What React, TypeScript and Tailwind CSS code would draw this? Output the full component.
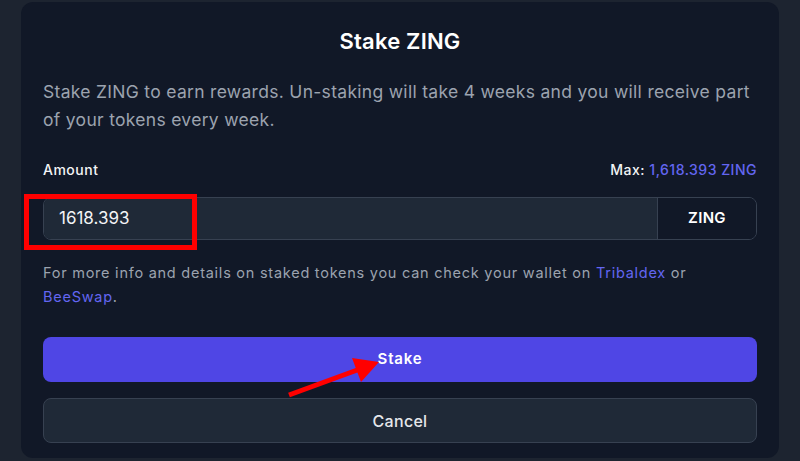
import React from "react";

export default function App() {
  return (
    <div className="relative w-[800px] h-[461px] overflow-hidden bg-[#1d2430] px-[21px] pt-[2px]" style={{ fontFamily: "Inter, 'Noto Sans', sans-serif" }}>
      <div className="relative w-[758px] bg-[#111827] rounded-xl px-[22px] pt-[25px] pb-[15px]">
        <h2 className="text-center text-[22px] leading-[28px] font-semibold text-white tracking-[0.2px]">Stake ZING</h2>
        <p className="mt-[23px] text-[17.5px] leading-[28px] text-[#9ca3af] tracking-[0.3px]">
          Stake ZING to earn rewards. Un-staking will take 4 weeks and you will receive part of your tokens every week.
        </p>
        <div className="mt-[26px] flex items-center justify-between text-[14px] leading-[20px] font-medium tracking-[0.5px]">
          <span className="text-[#f3f4f6]">Amount</span>
          <span className="text-[#f3f4f6]">
            Max: <span className="text-[#6366f1]">1,618.393 ZING</span>
          </span>
        </div>
        <div className="relative mt-[17px] flex h-[43px] rounded-lg border border-[#374151] overflow-hidden">
          <div className="flex-1 bg-[#1f2937] flex items-center pl-[15px] text-[17px] text-[#f3f4f6]">1618.393</div>
          <div className="w-[99px] border-l border-[#374151] bg-[#111827] flex items-center justify-center text-[15px] font-semibold text-white tracking-[0.3px]">ZING</div>
        </div>
        <p className="mt-[21px] text-[14.5px] leading-[24px] text-[#9ca3af] tracking-[0.75px]">
          For more info and details on staked tokens you can check your wallet on <span className="text-[#6366f1]">Tribaldex</span> or{" "}
          <span className="text-[#6366f1]">BeeSwap</span>.
        </p>
        <button className="mt-[28px] block w-full h-[45px] rounded-lg bg-[#4f46e5] text-white text-[15px] font-semibold tracking-[0.8px]">Stake</button>
        <button className="mt-[16px] block w-full h-[45px] rounded-lg bg-[#1f2937] border border-[#374151] text-[#e5e7eb] text-[16px] font-medium tracking-[0.3px]">Cancel</button>
      </div>
      <div className="absolute left-[24px] top-[194px] w-[173px] h-[56px] border-[5px] border-[#ff0000]" />
      <svg className="absolute left-0 top-0" width="800" height="461">
        <line x1="289" y1="395" x2="360" y2="369" stroke="#f00" strokeWidth="5" />
        <polygon points="379,362 352,358 361,382" fill="#f00" />
      </svg>
    </div>
  );
}
